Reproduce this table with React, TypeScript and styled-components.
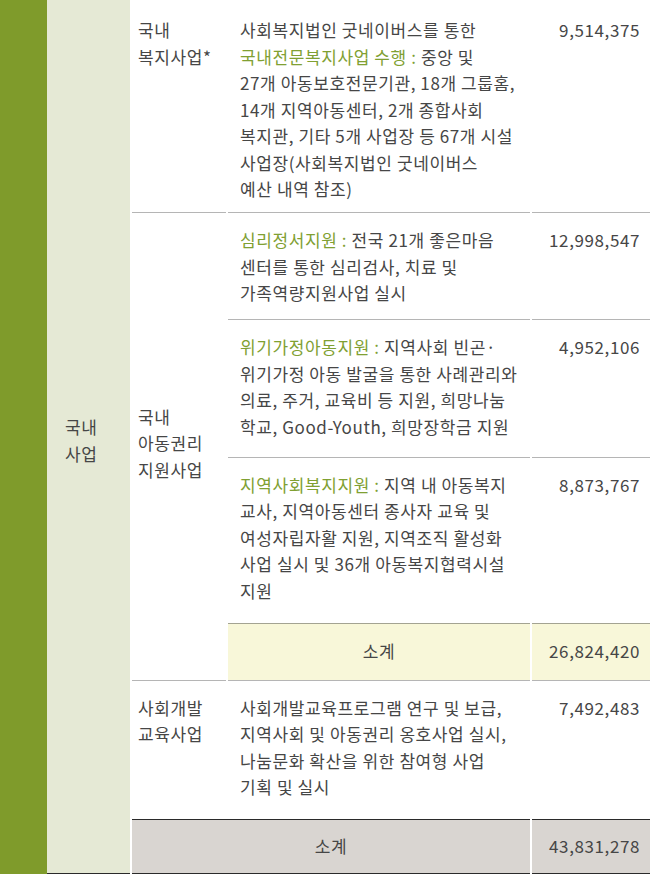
import styled, { createGlobalStyle } from "styled-components";

const GlobalStyle = createGlobalStyle`
  html, body {
    margin: 0;
    padding: 0;
    background: #ffffff;
    overflow: hidden;
  }
  body {
    font-family: "Noto Sans CJK KR", "Noto Sans", sans-serif;
  }
`;

const App = () => {
  return (
    <>
      <GlobalStyle />
      <Page>
        <Strip />
        <Table>
          <colgroup>
            <Col $w={83} />
            <Col $w={94} />
            <Col $w={302} />
            <Col $w={118} />
          </colgroup>
          <tbody>
            <Row $h={213} $first>
              <Side rowSpan={7}>
                국내
                <br />
                사업
              </Side>
              <Cat>
                국내
                <br />
                복지사업*
              </Cat>
              <Desc>
                사회복지법인 굿네이버스를 통한
                <br />
                <Green>국내전문복지사업 수행 :</Green> 중앙 및
                <br />
                27개 아동보호전문기관, 18개 그룹홈,
                <br />
                14개 지역아동센터, 2개 종합사회
                <br />
                복지관, 기타 5개 사업장 등 67개 시설
                <br />
                사업장(사회복지법인 굿네이버스
                <br />
                예산 내역 참조)
              </Desc>
              <Amount>9,514,375</Amount>
            </Row>
            <Row $h={107}>
              <Cat rowSpan={4} $middle>
                국내
                <br />
                아동권리
                <br />
                지원사업
              </Cat>
              <Desc>
                <Green>심리정서지원 :</Green> 전국 21개 좋은마음
                <br />
                센터를 통한 심리검사, 치료 및
                <br />
                가족역량지원사업 실시
              </Desc>
              <Amount>12,998,547</Amount>
            </Row>
            <Row $h={137}>
              <Desc>
                <Green>위기가정아동지원 :</Green> 지역사회 빈곤·
                <br />
                위기가정 아동 발굴을 통한 사례관리와
                <br />
                의료, 주거, 교육비 등 지원, 희망나눔
                <br />
                학교, Good-Youth, 희망장학금 지원
              </Desc>
              <Amount>4,952,106</Amount>
            </Row>
            <Row $h={165}>
              <Desc $plain>
                <Green>지역사회복지지원 :</Green> 지역 내 아동복지
                <br />
                교사, 지역아동센터 종사자 교육 및
                <br />
                여성자립자활 지원, 지역조직 활성화
                <br />
                사업 실시 및 36개 아동복지협력시설
                <br />
                지원
              </Desc>
              <Amount $plain>8,873,767</Amount>
            </Row>
            <Row $h={58}>
              <SubLabel>소계</SubLabel>
              <SubAmount>26,824,420</SubAmount>
            </Row>
            <Row $h={138}>
              <Cat $plain>
                사회개발
                <br />
                교육사업
              </Cat>
              <Desc $plain>
                사회개발교육프로그램 연구 및 보급,
                <br />
                지역사회 및 아동권리 옹호사업 실시,
                <br />
                나눔문화 확산을 위한 참여형 사업
                <br />
                기획 및 실시
              </Desc>
              <Amount $plain>7,492,483</Amount>
            </Row>
            <Row $h={55}>
              <TotalLabel colSpan={2}>소계</TotalLabel>
              <TotalAmount>43,831,278</TotalAmount>
            </Row>
          </tbody>
        </Table>
      </Page>
    </>
  );
};

const Page = styled.div`
  display: flex;
  width: 650px;
  height: 874px;
  overflow: hidden;
`;

const Strip = styled.div`
  flex: none;
  width: 47px;
  background: #7f9b2b;
`;

const Table = styled.table`
  flex: none;
  width: 607px;
  margin-left: -2px;
  border-collapse: separate;
  border-spacing: 2px 0;
  table-layout: fixed;
  font-size: 17px;
  line-height: 26.5px;
  letter-spacing: 0.6px;
  color: #464646;
`;

const Col = styled.col<{ $w: number }>`
  width: ${(p) => p.$w}px;
`;

const Row = styled.tr<{ $h: number; $first?: boolean }>`
  height: ${(p) => p.$h}px;

  & > td {
    padding-top: ${(p) => (p.$first ? 17 : 14)}px;
  }
`;

const Cell = styled.td<{ $plain?: boolean }>`
  box-sizing: border-box;
  vertical-align: top;
  white-space: nowrap;
  border-bottom: 1px solid ${(p) => (p.$plain ? "transparent" : "#b5b5b5")};
`;

const Side = styled.td`
  vertical-align: middle;
  background: #e5e9d5;
  padding: 8px 0 0 18px !important;
  border-bottom: 1px solid #2a2a2a;
`;

const Cat = styled(Cell)<{ $middle?: boolean }>`
  vertical-align: ${(p) => (p.$middle ? "middle" : "top")};
  padding-left: 6px;
  padding-bottom: ${(p) => (p.$middle ? 20 : 0)}px;
`;

const Desc = styled(Cell)`
  padding-left: 12px;
  padding-right: 6px;
`;

const Amount = styled(Cell)`
  text-align: right;
  padding-right: 10px;
`;

const Green = styled.span`
  color: #80a032;
`;

const SubLabel = styled.td`
  vertical-align: middle;
  text-align: center;
  padding: 0 !important;
  background: #f8f7d9;
  border-top: 1px solid #a3a392;
  border-bottom: 1px solid #b5b5b5;
`;

const SubAmount = styled(SubLabel)`
  text-align: right;
  padding-right: 10px !important;
`;

const TotalLabel = styled.td`
  vertical-align: middle;
  text-align: center;
  padding: 0 !important;
  background: #d9d5d1;
  border-top: 1px solid #2a2a2a;
  border-bottom: 1px solid #2a2a2a;
`;

const TotalAmount = styled(TotalLabel)`
  text-align: right;
  padding-right: 10px !important;
`;

export default App;
